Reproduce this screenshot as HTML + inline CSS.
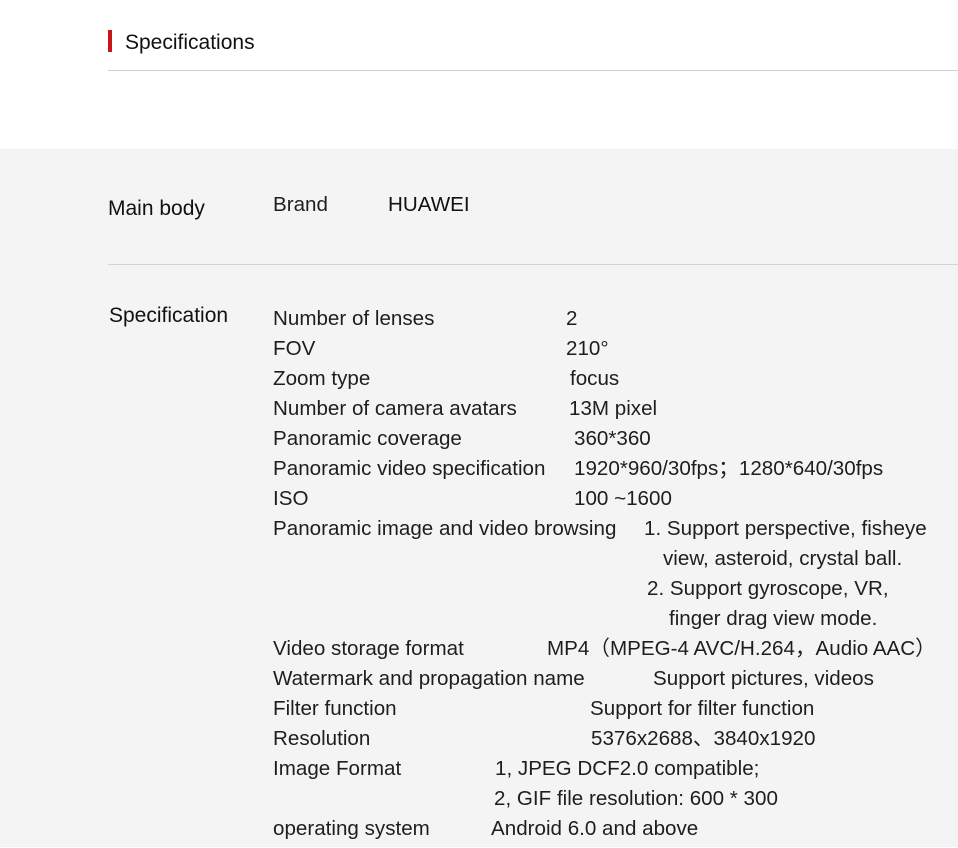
<!DOCTYPE html>
<html><head><meta charset="utf-8"><style>
body{margin:0;width:958px;height:847px;overflow:hidden;position:relative;background:#fff;font-family:"Liberation Sans","Noto Sans CJK SC",sans-serif;color:#1e1e1e}
.g{position:absolute;left:0;top:149px;width:958px;height:698px;background:#f4f4f4}
.t{position:absolute;font-size:20.6px;line-height:30px;white-space:nowrap;letter-spacing:0}
.hl{position:absolute;left:108px;height:1px;background:#d4d4d4;width:850px}
.c{position:absolute;left:0;top:1px;width:958px;height:847px}
</style></head><body>
<div style="position:absolute;left:108px;top:30px;width:4px;height:22px;background:#c8161d"></div>
<div class="t" style="left:125px;top:28px;font-size:21px;color:#111">Specifications</div>
<div class="hl" style="top:70px;background:#cfcfcf"></div>
<div class="g"></div>
<div class="hl" style="top:264px"></div>
<div class="c">
<div class="t" style="left:108px;top:193px;font-size:21px;color:#111">Main body</div>
<div class="t" style="left:273px;top:189px">Brand</div>
<div class="t" style="left:388px;top:189px;color:#111">HUAWEI</div>
<div class="t" style="left:109px;top:300px;font-size:21px;color:#111">Specification</div>
<div class="t" style="left:273px;top:303px">Number of lenses</div><div class="t" style="left:566px;top:303px">2</div>
<div class="t" style="left:273px;top:333px">FOV</div><div class="t" style="left:566px;top:333px">210°</div>
<div class="t" style="left:273px;top:363px">Zoom type</div><div class="t" style="left:570px;top:363px">focus</div>
<div class="t" style="left:273px;top:393px">Number of camera avatars</div><div class="t" style="left:569px;top:393px">13M pixel</div>
<div class="t" style="left:273px;top:423px">Panoramic coverage</div><div class="t" style="left:574px;top:423px">360*360</div>
<div class="t" style="left:273px;top:453px">Panoramic video specification</div><div class="t" style="left:574px;top:453px">1920*960/30fps；1280*640/30fps</div>
<div class="t" style="left:273px;top:483px">ISO</div><div class="t" style="left:574px;top:483px">100 ~1600</div>
<div class="t" style="left:273px;top:513px">Panoramic image and video browsing</div><div class="t" style="left:644px;top:513px">1. Support perspective, fisheye</div>
<div class="t" style="left:663px;top:543px">view, asteroid, crystal ball.</div>
<div class="t" style="left:647px;top:573px">2. Support gyroscope, VR,</div>
<div class="t" style="left:669px;top:603px">finger drag view mode.</div>
<div class="t" style="left:273px;top:633px">Video storage format</div><div class="t" style="left:547px;top:633px">MP4（MPEG-4 AVC/H.264，Audio AAC）</div>
<div class="t" style="left:273px;top:663px">Watermark and propagation name</div><div class="t" style="left:653px;top:663px">Support pictures, videos</div>
<div class="t" style="left:273px;top:693px">Filter function</div><div class="t" style="left:590px;top:693px">Support for filter function</div>
<div class="t" style="left:273px;top:723px">Resolution</div><div class="t" style="left:591px;top:723px">5376x2688、3840x1920</div>
<div class="t" style="left:273px;top:753px">Image Format</div><div class="t" style="left:495px;top:753px">1, JPEG DCF2.0 compatible;</div>
<div class="t" style="left:494px;top:783px">2, GIF file resolution: 600 * 300</div>
<div class="t" style="left:273px;top:813px">operating system</div><div class="t" style="left:491px;top:813px">Android 6.0 and above</div>
</div>
</body></html>
